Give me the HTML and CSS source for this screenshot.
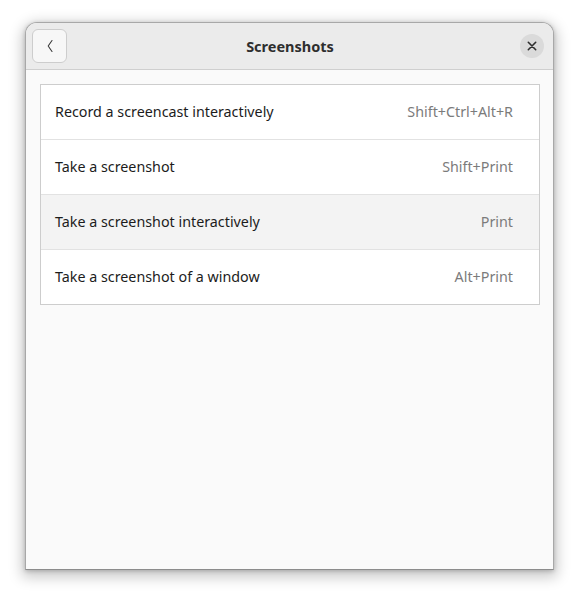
FILE: index.html
```html
<!DOCTYPE html>
<html>
<head>
<meta charset="utf-8">
<link rel="stylesheet" href="styles.css">
</head>
<body>
<div class="window">
  <header class="headerbar">
    <div class="start">
      <button class="back-btn" aria-label="Back">
        <svg width="16" height="16" viewBox="0 0 16 16"><path d="M10 2.5 L6.2 8 L10 13.5" fill="none" stroke="#3a3a3a" stroke-width="1.1" stroke-linecap="round" stroke-linejoin="round"/></svg>
      </button>
    </div>
    <div class="title">Screenshots</div>
    <div class="end">
      <button class="close-btn" aria-label="Close">
        <svg width="12" height="12" viewBox="0 0 12 12"><path d="M2.3 2.3 L9.7 9.7 M9.7 2.3 L2.3 9.7" stroke="#2e2e2e" stroke-width="1.6" stroke-linecap="round"/></svg>
      </button>
    </div>
  </header>
  <main class="content">
    <div class="listbox">
      <div class="row"><span class="label">Record a screencast interactively</span><span class="accel">Shift+Ctrl+Alt+R</span></div>
      <div class="row"><span class="label">Take a screenshot</span><span class="accel">Shift+Print</span></div>
      <div class="row hover"><span class="label">Take a screenshot interactively</span><span class="accel">Print</span></div>
      <div class="row"><span class="label">Take a screenshot of a window</span><span class="accel">Alt+Print</span></div>
    </div>
  </main>
</div>
</body>
</html>
```
FILE: styles.css
```css
html, body {
  margin: 0;
  padding: 0;
  background: #ffffff;
}
body {
  padding: 22px 0 30px 25px;
  font-family: "Noto Sans", "Open Sans", sans-serif;
}
.window {
  width: 529px;
  height: 548px;
  box-sizing: border-box;
  border: 1px solid #a8a8a8;
  border-bottom-color: #8c8c8c;
  border-radius: 12px 12px 0 0;
  background: #fafafa;
  box-shadow: 0 4px 14px 3px rgba(0,0,0,0.22), 0 1px 4px rgba(0,0,0,0.2);
  display: flex;
  flex-direction: column;
  overflow: hidden;
}
.headerbar {
  height: 46px;
  flex: none;
  background: #ebebeb;
  border-bottom: 1px solid #cfcfcf;
  display: grid;
  grid-template-columns: 1fr auto 1fr;
  align-items: center;
  padding: 0 9px 0 6px;
}
.start {
  display: flex;
  justify-content: flex-start;
}
.end {
  display: flex;
  justify-content: flex-end;
}
.back-btn {
  width: 35px;
  height: 34px;
  box-sizing: border-box;
  border: 1px solid #cdcdcd;
  border-radius: 6px;
  background: #f7f7f7;
  display: flex;
  align-items: center;
  justify-content: center;
  padding: 0;
}
.title {
  text-align: center;
  font-weight: bold;
  font-size: 14.5px;
  color: #2e2e2e;
  padding-left: 4px;
}
.close-btn {
  width: 24px;
  height: 24px;
  border-radius: 50%;
  border: none;
  background: #dadada;
  display: flex;
  align-items: center;
  justify-content: center;
  padding: 0;
}
.content {
  flex: 1;
  padding: 14px 13px 14px 14px;
}
.listbox {
  border: 1px solid #cdcdcd;
  background: #ffffff;
}
.row {
  height: 53px;
  display: flex;
  align-items: center;
  justify-content: space-between;
  padding: 0 26px 1px 14px;
  border-top: 1px solid #e2e2e2;
  font-size: 14.3px;
  line-height: 20px;
}
.row:first-child {
  border-top: none;
}
.row.hover {
  background: #f3f3f3;
}
.label {
  color: #1c1c1c;
}
.accel {
  color: #7b7b7b;
}
```
